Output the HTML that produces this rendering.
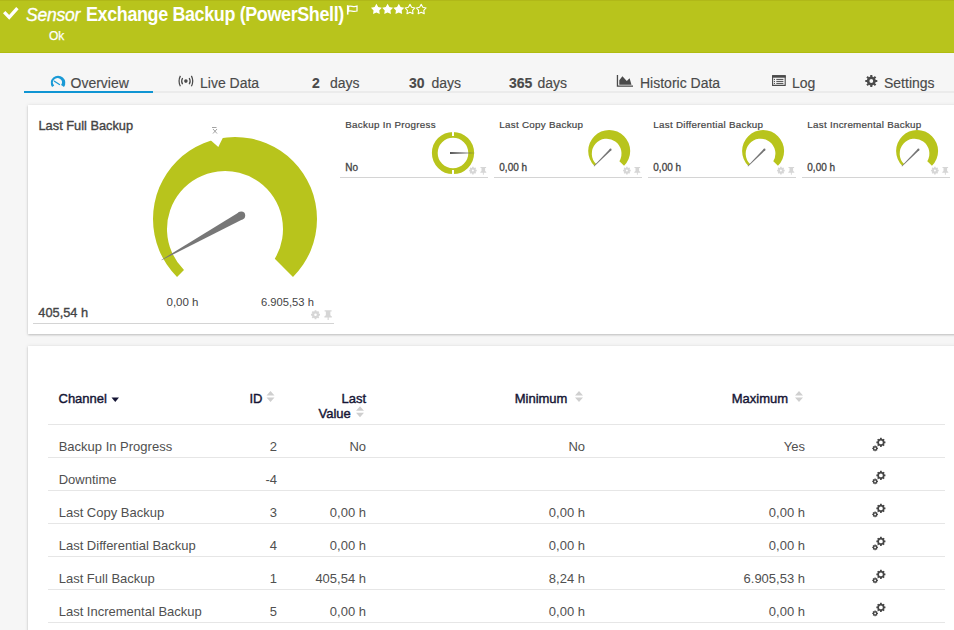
<!DOCTYPE html>
<html><head><meta charset="utf-8">
<style>
*{margin:0;padding:0;box-sizing:border-box}
html,body{width:954px;height:630px;overflow:hidden;background:#f6f6f6;font-family:"Liberation Sans",sans-serif;position:relative}
.a{position:absolute;white-space:nowrap;line-height:1}
.panel{position:absolute;background:#fff;box-shadow:0 1px 2px rgba(0,0,0,.2),0 0 4px rgba(0,0,0,.08)}
svg{position:absolute;left:0;top:0}
</style></head><body>
<div class="a" style="left:0;top:0;width:954px;height:52px;background:#b8c41c"></div>
<div class="a" style="left:0;top:0;width:954px;height:1px;background:#b0b818"></div>
<div class="a" style="left:0;top:52px;width:954px;height:1px;background:#b0bc10"></div>
<div class="a" style="left:24px;top:91px;width:930px;height:2px;background:#ebebeb"></div>
<div class="a" style="left:24px;top:91px;width:129px;height:2px;background:#0f95d3"></div>
<div class="panel" style="left:28px;top:105px;width:940px;height:229px"></div>
<div class="panel" style="left:28px;top:346px;width:940px;height:300px"></div>
<div class="a " style="left:26px;top:7.19px;font-size:17.5px;font-style:italic;color:#fff;letter-spacing:-0.2px;-webkit-text-stroke:0.35px #fff">Sensor</div>
<div class="a " style="left:86px;top:4.89px;font-size:19.5px;font-weight:bold;color:#fff;letter-spacing:-0.4px;transform:scaleX(0.92);transform-origin:0 0">Exchange Backup (PowerShell)</div>
<div class="a " style="left:49px;top:29.64px;font-size:12px;color:#fff;-webkit-text-stroke:0.25px #fff">Ok</div>
<div class="a " style="left:70.5px;top:76.15px;font-size:14px;color:#4a4a4a;-webkit-text-stroke:0.15px #4a4a4a">Overview</div>
<div class="a " style="left:200px;top:76.15px;font-size:14px;color:#4a4a4a;-webkit-text-stroke:0.15px #4a4a4a">Live Data</div>
<div class="a " style="left:312px;top:76.15px;font-size:14px;color:#4a4a4a;-webkit-text-stroke:0.15px #4a4a4a"><b>2</b></div>
<div class="a " style="left:330px;top:76.15px;font-size:14px;color:#4a4a4a;-webkit-text-stroke:0.15px #4a4a4a">days</div>
<div class="a " style="left:409px;top:76.15px;font-size:14px;color:#4a4a4a;-webkit-text-stroke:0.15px #4a4a4a"><b>30</b></div>
<div class="a " style="left:431.5px;top:76.15px;font-size:14px;color:#4a4a4a;-webkit-text-stroke:0.15px #4a4a4a">days</div>
<div class="a " style="left:509px;top:76.15px;font-size:14px;color:#4a4a4a;-webkit-text-stroke:0.15px #4a4a4a"><b>365</b></div>
<div class="a " style="left:537.5px;top:76.15px;font-size:14px;color:#4a4a4a;-webkit-text-stroke:0.15px #4a4a4a">days</div>
<div class="a " style="left:640px;top:76.15px;font-size:14px;color:#4a4a4a;-webkit-text-stroke:0.15px #4a4a4a">Historic Data</div>
<div class="a " style="left:792px;top:76.15px;font-size:14px;color:#4a4a4a;-webkit-text-stroke:0.15px #4a4a4a">Log</div>
<div class="a " style="left:884px;top:76.15px;font-size:14px;color:#4a4a4a;-webkit-text-stroke:0.15px #4a4a4a">Settings</div>
<div class="a " style="left:38.5px;top:119.96px;font-size:12.8px;color:#444;-webkit-text-stroke:0.35px #444">Last Full Backup</div>
<div class="a " style="left:38.3px;top:307.16px;font-size:12.8px;color:#444;-webkit-text-stroke:0.35px #444">405,54 h</div>
<div class="a " style="left:166.5px;top:297.17px;font-size:11.5px;color:#444">0,00 h</div>
<div class="a " style="left:261px;top:297.42px;font-size:11.2px;color:#444">6.905,53 h</div>
<div class="a " style="left:345.3px;top:119.90px;font-size:9.8px;color:#444;letter-spacing:0.28px;-webkit-text-stroke:0.2px #444">Backup In Progress</div>
<div class="a " style="left:345.3px;top:162.53px;font-size:10px;color:#444;-webkit-text-stroke:0.3px #444">No</div>
<div class="a " style="left:499.3px;top:119.90px;font-size:9.8px;color:#444;letter-spacing:0.28px;-webkit-text-stroke:0.2px #444">Last Copy Backup</div>
<div class="a " style="left:499.3px;top:162.53px;font-size:10px;color:#444;-webkit-text-stroke:0.3px #444">0,00 h</div>
<div class="a " style="left:653.3px;top:119.90px;font-size:9.8px;color:#444;letter-spacing:0.28px;-webkit-text-stroke:0.2px #444">Last Differential Backup</div>
<div class="a " style="left:653.3px;top:162.53px;font-size:10px;color:#444;-webkit-text-stroke:0.3px #444">0,00 h</div>
<div class="a " style="left:807.3px;top:119.90px;font-size:9.8px;color:#444;letter-spacing:0.28px;-webkit-text-stroke:0.2px #444">Last Incremental Backup</div>
<div class="a " style="left:807.3px;top:162.53px;font-size:10px;color:#444;-webkit-text-stroke:0.3px #444">0,00 h</div>
<div class="a " style="left:58.5px;top:392.00px;font-size:13px;color:#151535;-webkit-text-stroke:0.4px #151535">Channel</div>
<div class="a " style="left:249.5px;top:392.00px;font-size:13px;color:#151535;-webkit-text-stroke:0.4px #151535">ID</div>
<div class="a " style="right:588px;top:392.00px;font-size:13px;color:#151535;-webkit-text-stroke:0.4px #151535">Last</div>
<div class="a " style="left:318.5px;top:406.60px;font-size:13px;color:#151535;-webkit-text-stroke:0.4px #151535">Value</div>
<div class="a " style="left:514.7px;top:392.00px;font-size:13px;color:#151535;-webkit-text-stroke:0.4px #151535">Minimum</div>
<div class="a " style="left:731.7px;top:392.00px;font-size:13px;color:#151535;-webkit-text-stroke:0.4px #151535">Maximum</div>
<div class="a " style="left:58.7px;top:440.10px;font-size:13px;color:#505050">Backup In Progress</div>
<div class="a " style="right:677px;top:440.10px;font-size:13px;color:#505050">2</div>
<div class="a " style="right:588px;top:440.10px;font-size:13px;color:#505050">No</div>
<div class="a " style="right:369px;top:440.10px;font-size:13px;color:#505050">No</div>
<div class="a " style="right:149px;top:440.10px;font-size:13px;color:#505050">Yes</div>
<div class="a " style="left:58.7px;top:473.10px;font-size:13px;color:#505050">Downtime</div>
<div class="a " style="right:677px;top:473.10px;font-size:13px;color:#505050">-4</div>
<div class="a " style="left:58.7px;top:506.10px;font-size:13px;color:#505050">Last Copy Backup</div>
<div class="a " style="right:677px;top:506.10px;font-size:13px;color:#505050">3</div>
<div class="a " style="right:588px;top:506.10px;font-size:13px;color:#505050">0,00 h</div>
<div class="a " style="right:369px;top:506.10px;font-size:13px;color:#505050">0,00 h</div>
<div class="a " style="right:149px;top:506.10px;font-size:13px;color:#505050">0,00 h</div>
<div class="a " style="left:58.7px;top:539.10px;font-size:13px;color:#505050">Last Differential Backup</div>
<div class="a " style="right:677px;top:539.10px;font-size:13px;color:#505050">4</div>
<div class="a " style="right:588px;top:539.10px;font-size:13px;color:#505050">0,00 h</div>
<div class="a " style="right:369px;top:539.10px;font-size:13px;color:#505050">0,00 h</div>
<div class="a " style="right:149px;top:539.10px;font-size:13px;color:#505050">0,00 h</div>
<div class="a " style="left:58.7px;top:572.10px;font-size:13px;color:#505050">Last Full Backup</div>
<div class="a " style="right:677px;top:572.10px;font-size:13px;color:#505050">1</div>
<div class="a " style="right:588px;top:572.10px;font-size:13px;color:#505050">405,54 h</div>
<div class="a " style="right:369px;top:572.10px;font-size:13px;color:#505050">8,24 h</div>
<div class="a " style="right:149px;top:572.10px;font-size:13px;color:#505050">6.905,53 h</div>
<div class="a " style="left:58.7px;top:605.10px;font-size:13px;color:#505050">Last Incremental Backup</div>
<div class="a " style="right:677px;top:605.10px;font-size:13px;color:#505050">5</div>
<div class="a " style="right:588px;top:605.10px;font-size:13px;color:#505050">0,00 h</div>
<div class="a " style="right:369px;top:605.10px;font-size:13px;color:#505050">0,00 h</div>
<div class="a " style="right:149px;top:605.10px;font-size:13px;color:#505050">0,00 h</div>
<svg width="954" height="630" viewBox="0 0 954 630">
<path d="M4.2 12.2 L9.2 17.4 L17.4 8.2" fill="none" stroke="#fff" stroke-width="3.3"/>
<path d="M347.7 5.2 V14.6" stroke="#fff" stroke-width="1.6"/><path d="M348.6 6.4 C351.2 5.4, 353.4 7.6, 357 6.2 V11 C353.4 12.4, 351.2 10.2, 348.6 11.2 Z" fill="none" stroke="#fff" stroke-width="1.25"/>
<path d="M376.40 3.80 L374.62 7.06 L370.98 7.74 L373.53 10.43 L373.05 14.11 L376.40 12.52 L379.75 14.11 L379.27 10.43 L381.82 7.74 L378.18 7.06Z" fill="#fff"/>
<path d="M387.60 3.80 L385.82 7.06 L382.18 7.74 L384.73 10.43 L384.25 14.11 L387.60 12.52 L390.95 14.11 L390.47 10.43 L393.02 7.74 L389.38 7.06Z" fill="#fff"/>
<path d="M398.80 3.80 L397.02 7.06 L393.38 7.74 L395.93 10.43 L395.45 14.11 L398.80 12.52 L402.15 14.11 L401.67 10.43 L404.22 7.74 L400.58 7.06Z" fill="#fff"/>
<path d="M410.00 3.80 L408.22 7.06 L404.58 7.74 L407.13 10.43 L406.65 14.11 L410.00 12.52 L413.35 14.11 L412.87 10.43 L415.42 7.74 L411.78 7.06Z" fill="none" stroke="#fff" stroke-width="1.2" stroke-linejoin="round" transform="translate(410.0 9.5) scale(0.9) translate(-410.0 -9.5)"/>
<path d="M421.20 3.80 L419.42 7.06 L415.78 7.74 L418.33 10.43 L417.85 14.11 L421.20 12.52 L424.55 14.11 L424.07 10.43 L426.62 7.74 L422.98 7.06Z" fill="none" stroke="#fff" stroke-width="1.2" stroke-linejoin="round" transform="translate(421.2 9.5) scale(0.9) translate(-421.2 -9.5)"/>
<path d="M52.11 87.11 A7.25 7.25 0 1 1 63.99 87.11 L61.10 85.09 A4.45 4.45 0 1 0 54.23 85.62 Z" fill="#1a9ad6"/>
<path d="M54.4 81.2 L59.5 84.5" stroke="#1a9ad6" stroke-width="1.3" stroke-linecap="round"/>
<circle cx="185.9" cy="81.1" r="1.8" fill="#4a4a4a"/>
<path d="M180.4 75.9 A11.4 11.4 0 0 0 180.4 86.3 M191.4 75.9 A11.4 11.4 0 0 1 191.4 86.3 M182.6 78 A6.1 6.1 0 0 0 182.6 84.3 M189.2 78 A6.1 6.1 0 0 1 189.2 84.3" fill="none" stroke="#4a4a4a" stroke-width="1.25"/>
<path d="M616.8 86.8 V74.9 H618.1 V85.6 H633 V86.8Z M619.3 84.7 V80.3 L622.4 76.3 L626.8 81 L629.6 78.3 L631.5 84.7Z" fill="#4a4a4a"/>
<path d="M772.6 76 H785.2 V85.4 H772.6Z" fill="none" stroke="#4a4a4a" stroke-width="1.1"/><rect x="772.1" y="75.1" width="13.6" height="2.6" fill="#4a4a4a"/><path d="M776.3 79.4 H783.4 M776.3 81.4 H783.4 M776.3 83.4 H783.4" stroke="#4a4a4a" stroke-width="1"/><circle cx="774.4" cy="79.4" r="0.6" fill="#4a4a4a"/><circle cx="774.4" cy="81.4" r="0.6" fill="#4a4a4a"/><circle cx="774.4" cy="83.4" r="0.6" fill="#4a4a4a"/>
<path d="M875.70 79.98 L877.31 79.94 L877.31 82.06 L875.70 82.02 L875.13 83.39 L876.30 84.50 L874.80 86.00 L873.69 84.83 L872.32 85.40 L872.36 87.01 L870.24 87.01 L870.28 85.40 L868.91 84.83 L867.80 86.00 L866.30 84.50 L867.47 83.39 L866.90 82.02 L865.29 82.06 L865.29 79.94 L866.90 79.98 L867.47 78.61 L866.30 77.50 L867.80 76.00 L868.91 77.17 L870.28 76.60 L870.24 74.99 L872.36 74.99 L872.32 76.60 L873.69 77.17 L874.80 76.00 L876.30 77.50 L875.13 78.61Z M873.20 81.00 A1.9 1.9 0 1 0 869.40 81.00 A1.9 1.9 0 1 0 873.20 81.00Z" fill="#4a4a4a" fill-rule="evenodd"/>
<path d="M177.02 276.98 A82.00 82.00 0 1 1 292.98 276.98 L274.77 258.77 A58.00 58.00 0 1 0 183.99 270.01 Z" fill="#b8c41c"/>
<path d="M203.3 133.7 L218.3 146.9 L227.3 128.7 Z" fill="#fff"/>
<path d="M239.38 212.08 L161.29 259.91 L161.53 260.34 L243.19 218.89Z" fill="#777"/><circle cx="241.29" cy="215.49" r="3.90" fill="#777"/>
<path d="M594.35 165.85 A21.00 21.00 0 1 1 624.05 165.85 L619.39 161.19 A14.85 14.85 0 1 0 596.14 164.06 Z" fill="#b8c41c"/>
<path d="M609.83 148.92 L593.76 166.09 L594.11 166.44 L611.28 150.37Z" fill="#747474"/><circle cx="610.56" cy="149.64" r="1.02" fill="#747474"/>
<path d="M748.25 165.85 A21.00 21.00 0 1 1 777.95 165.85 L773.29 161.19 A14.85 14.85 0 1 0 750.04 164.06 Z" fill="#b8c41c"/>
<path d="M763.73 148.92 L747.66 166.09 L748.01 166.44 L765.18 150.37Z" fill="#747474"/><circle cx="764.46" cy="149.64" r="1.02" fill="#747474"/>
<path d="M902.25 165.85 A21.00 21.00 0 1 1 931.95 165.85 L927.29 161.19 A14.85 14.85 0 1 0 904.04 164.06 Z" fill="#b8c41c"/>
<path d="M917.73 148.92 L901.66 166.09 L902.01 166.44 L919.18 150.37Z" fill="#747474"/><circle cx="918.46" cy="149.64" r="1.02" fill="#747474"/>
<circle cx="453" cy="153" r="18.2" fill="none" stroke="#b8c41c" stroke-width="5.8"/>
<rect x="452" y="128" width="2" height="8" fill="#fff"/><rect x="452" y="170" width="2" height="8" fill="#fff"/>
<defs><linearGradient id="ng" x1="0" x2="1"><stop offset="0" stop-color="#555"/><stop offset="1" stop-color="#555" stop-opacity="0.05"/></linearGradient></defs>
<rect x="450" y="152" width="25" height="2" fill="url(#ng)"/>
<path d="M212 127.5 H216.5" stroke="#999" stroke-width="0.9"/><path d="M213 129 L217 133.5 M217 129 L213 133.5" stroke="#999" stroke-width="0.9"/>
<rect x="33" y="323" width="301" height="1" fill="#d4d4d4"/>
<path d="M318.97 313.77 L320.02 313.82 L320.02 315.58 L318.97 315.63 L318.61 316.49 L319.31 317.27 L318.07 318.51 L317.29 317.81 L316.43 318.17 L316.38 319.22 L314.62 319.22 L314.57 318.17 L313.71 317.81 L312.93 318.51 L311.69 317.27 L312.39 316.49 L312.03 315.63 L310.98 315.58 L310.98 313.82 L312.03 313.77 L312.39 312.91 L311.69 312.13 L312.93 310.89 L313.71 311.59 L314.57 311.23 L314.62 310.18 L316.38 310.18 L316.43 311.23 L317.29 311.59 L318.07 310.89 L319.31 312.13 L318.61 312.91Z M316.80 314.70 A1.3 1.3 0 1 0 314.20 314.70 A1.3 1.3 0 1 0 316.80 314.70Z" fill="#d6d6d6" fill-rule="evenodd"/>
<path d="M324.60 310.20 L331.60 310.20 L331.60 311.45 L330.35 311.45 L330.35 315.20 L331.85 316.45 L331.85 317.45 L328.73 317.45 L328.73 319.95 L327.60 319.95 L327.60 317.45 L324.35 317.45 L324.35 316.45 L325.85 315.20 L325.85 311.45 L324.60 311.45Z" fill="#d6d6d6"/>
<rect x="340" y="177" width="148" height="1" fill="#d4d4d4"/>
<path d="M475.84 169.81 L476.73 169.86 L476.73 171.34 L475.84 171.39 L475.53 172.12 L476.13 172.78 L475.08 173.83 L474.42 173.23 L473.69 173.54 L473.64 174.43 L472.16 174.43 L472.11 173.54 L471.38 173.23 L470.72 173.83 L469.67 172.78 L470.27 172.12 L469.96 171.39 L469.07 171.34 L469.07 169.86 L469.96 169.81 L470.27 169.08 L469.67 168.42 L470.72 167.37 L471.38 167.97 L472.11 167.66 L472.16 166.77 L473.64 166.77 L473.69 167.66 L474.42 167.97 L475.08 167.37 L476.13 168.42 L475.53 169.08Z M473.90 170.60 A1.0 1.0 0 1 0 471.90 170.60 A1.0 1.0 0 1 0 473.90 170.60Z" fill="#d6d6d6" fill-rule="evenodd"/>
<path d="M480.50 167.00 L486.10 167.00 L486.10 168.00 L485.10 168.00 L485.10 171.00 L486.30 172.00 L486.30 172.80 L483.80 172.80 L483.80 174.80 L482.90 174.80 L482.90 172.80 L480.30 172.80 L480.30 172.00 L481.50 171.00 L481.50 168.00 L480.50 168.00Z" fill="#d6d6d6"/>
<rect x="494" y="177" width="148" height="1" fill="#d4d4d4"/>
<path d="M629.84 169.81 L630.73 169.86 L630.73 171.34 L629.84 171.39 L629.53 172.12 L630.13 172.78 L629.08 173.83 L628.42 173.23 L627.69 173.54 L627.64 174.43 L626.16 174.43 L626.11 173.54 L625.38 173.23 L624.72 173.83 L623.67 172.78 L624.27 172.12 L623.96 171.39 L623.07 171.34 L623.07 169.86 L623.96 169.81 L624.27 169.08 L623.67 168.42 L624.72 167.37 L625.38 167.97 L626.11 167.66 L626.16 166.77 L627.64 166.77 L627.69 167.66 L628.42 167.97 L629.08 167.37 L630.13 168.42 L629.53 169.08Z M627.90 170.60 A1.0 1.0 0 1 0 625.90 170.60 A1.0 1.0 0 1 0 627.90 170.60Z" fill="#d6d6d6" fill-rule="evenodd"/>
<path d="M634.50 167.00 L640.10 167.00 L640.10 168.00 L639.10 168.00 L639.10 171.00 L640.30 172.00 L640.30 172.80 L637.80 172.80 L637.80 174.80 L636.90 174.80 L636.90 172.80 L634.30 172.80 L634.30 172.00 L635.50 171.00 L635.50 168.00 L634.50 168.00Z" fill="#d6d6d6"/>
<rect x="648" y="177" width="148" height="1" fill="#d4d4d4"/>
<path d="M783.84 169.81 L784.73 169.86 L784.73 171.34 L783.84 171.39 L783.53 172.12 L784.13 172.78 L783.08 173.83 L782.42 173.23 L781.69 173.54 L781.64 174.43 L780.16 174.43 L780.11 173.54 L779.38 173.23 L778.72 173.83 L777.67 172.78 L778.27 172.12 L777.96 171.39 L777.07 171.34 L777.07 169.86 L777.96 169.81 L778.27 169.08 L777.67 168.42 L778.72 167.37 L779.38 167.97 L780.11 167.66 L780.16 166.77 L781.64 166.77 L781.69 167.66 L782.42 167.97 L783.08 167.37 L784.13 168.42 L783.53 169.08Z M781.90 170.60 A1.0 1.0 0 1 0 779.90 170.60 A1.0 1.0 0 1 0 781.90 170.60Z" fill="#d6d6d6" fill-rule="evenodd"/>
<path d="M788.50 167.00 L794.10 167.00 L794.10 168.00 L793.10 168.00 L793.10 171.00 L794.30 172.00 L794.30 172.80 L791.80 172.80 L791.80 174.80 L790.90 174.80 L790.90 172.80 L788.30 172.80 L788.30 172.00 L789.50 171.00 L789.50 168.00 L788.50 168.00Z" fill="#d6d6d6"/>
<rect x="802" y="177" width="148" height="1" fill="#d4d4d4"/>
<path d="M937.84 169.81 L938.73 169.86 L938.73 171.34 L937.84 171.39 L937.53 172.12 L938.13 172.78 L937.08 173.83 L936.42 173.23 L935.69 173.54 L935.64 174.43 L934.16 174.43 L934.11 173.54 L933.38 173.23 L932.72 173.83 L931.67 172.78 L932.27 172.12 L931.96 171.39 L931.07 171.34 L931.07 169.86 L931.96 169.81 L932.27 169.08 L931.67 168.42 L932.72 167.37 L933.38 167.97 L934.11 167.66 L934.16 166.77 L935.64 166.77 L935.69 167.66 L936.42 167.97 L937.08 167.37 L938.13 168.42 L937.53 169.08Z M935.90 170.60 A1.0 1.0 0 1 0 933.90 170.60 A1.0 1.0 0 1 0 935.90 170.60Z" fill="#d6d6d6" fill-rule="evenodd"/>
<path d="M942.50 167.00 L948.10 167.00 L948.10 168.00 L947.10 168.00 L947.10 171.00 L948.30 172.00 L948.30 172.80 L945.80 172.80 L945.80 174.80 L944.90 174.80 L944.90 172.80 L942.30 172.80 L942.30 172.00 L943.50 171.00 L943.50 168.00 L942.50 168.00Z" fill="#d6d6d6"/>
<rect x="48" y="424" width="897" height="1" fill="#e6e6e6"/>
<rect x="48" y="457" width="897" height="1" fill="#e6e6e6"/>
<path d="M884.47 441.51 L885.43 441.60 L885.43 443.20 L884.47 443.29 L884.05 444.30 L884.67 445.04 L883.54 446.17 L882.80 445.55 L881.79 445.97 L881.70 446.93 L880.10 446.93 L880.01 445.97 L879.00 445.55 L878.26 446.17 L877.13 445.04 L877.75 444.30 L877.33 443.29 L876.37 443.20 L876.37 441.60 L877.33 441.51 L877.75 440.50 L877.13 439.76 L878.26 438.63 L879.00 439.25 L880.01 438.83 L880.10 437.87 L881.70 437.87 L881.79 438.83 L882.80 439.25 L883.54 438.63 L884.67 439.76 L884.05 440.50Z M882.80 442.40 A1.9 1.9 0 1 0 879.00 442.40 A1.9 1.9 0 1 0 882.80 442.40Z" fill="#454545" fill-rule="evenodd"/>
<path d="M877.27 447.78 L877.94 447.80 L877.94 449.00 L877.27 449.02 L877.08 449.50 L877.53 449.98 L876.68 450.83 L876.20 450.38 L875.72 450.57 L875.70 451.24 L874.50 451.24 L874.48 450.57 L874.00 450.38 L873.52 450.83 L872.67 449.98 L873.12 449.50 L872.93 449.02 L872.26 449.00 L872.26 447.80 L872.93 447.78 L873.12 447.30 L872.67 446.82 L873.52 445.97 L874.00 446.42 L874.48 446.23 L874.50 445.56 L875.70 445.56 L875.72 446.23 L876.20 446.42 L876.68 445.97 L877.53 446.82 L877.08 447.30Z M876.00 448.40 A0.9 0.9 0 1 0 874.20 448.40 A0.9 0.9 0 1 0 876.00 448.40Z" fill="#454545" fill-rule="evenodd"/>
<rect x="48" y="490" width="897" height="1" fill="#e6e6e6"/>
<path d="M884.47 474.51 L885.43 474.60 L885.43 476.20 L884.47 476.29 L884.05 477.30 L884.67 478.04 L883.54 479.17 L882.80 478.55 L881.79 478.97 L881.70 479.93 L880.10 479.93 L880.01 478.97 L879.00 478.55 L878.26 479.17 L877.13 478.04 L877.75 477.30 L877.33 476.29 L876.37 476.20 L876.37 474.60 L877.33 474.51 L877.75 473.50 L877.13 472.76 L878.26 471.63 L879.00 472.25 L880.01 471.83 L880.10 470.87 L881.70 470.87 L881.79 471.83 L882.80 472.25 L883.54 471.63 L884.67 472.76 L884.05 473.50Z M882.80 475.40 A1.9 1.9 0 1 0 879.00 475.40 A1.9 1.9 0 1 0 882.80 475.40Z" fill="#454545" fill-rule="evenodd"/>
<path d="M877.27 480.78 L877.94 480.80 L877.94 482.00 L877.27 482.02 L877.08 482.50 L877.53 482.98 L876.68 483.83 L876.20 483.38 L875.72 483.57 L875.70 484.24 L874.50 484.24 L874.48 483.57 L874.00 483.38 L873.52 483.83 L872.67 482.98 L873.12 482.50 L872.93 482.02 L872.26 482.00 L872.26 480.80 L872.93 480.78 L873.12 480.30 L872.67 479.82 L873.52 478.97 L874.00 479.42 L874.48 479.23 L874.50 478.56 L875.70 478.56 L875.72 479.23 L876.20 479.42 L876.68 478.97 L877.53 479.82 L877.08 480.30Z M876.00 481.40 A0.9 0.9 0 1 0 874.20 481.40 A0.9 0.9 0 1 0 876.00 481.40Z" fill="#454545" fill-rule="evenodd"/>
<rect x="48" y="523" width="897" height="1" fill="#e6e6e6"/>
<path d="M884.47 507.51 L885.43 507.60 L885.43 509.20 L884.47 509.29 L884.05 510.30 L884.67 511.04 L883.54 512.17 L882.80 511.55 L881.79 511.97 L881.70 512.93 L880.10 512.93 L880.01 511.97 L879.00 511.55 L878.26 512.17 L877.13 511.04 L877.75 510.30 L877.33 509.29 L876.37 509.20 L876.37 507.60 L877.33 507.51 L877.75 506.50 L877.13 505.76 L878.26 504.63 L879.00 505.25 L880.01 504.83 L880.10 503.87 L881.70 503.87 L881.79 504.83 L882.80 505.25 L883.54 504.63 L884.67 505.76 L884.05 506.50Z M882.80 508.40 A1.9 1.9 0 1 0 879.00 508.40 A1.9 1.9 0 1 0 882.80 508.40Z" fill="#454545" fill-rule="evenodd"/>
<path d="M877.27 513.78 L877.94 513.80 L877.94 515.00 L877.27 515.02 L877.08 515.50 L877.53 515.98 L876.68 516.83 L876.20 516.38 L875.72 516.57 L875.70 517.24 L874.50 517.24 L874.48 516.57 L874.00 516.38 L873.52 516.83 L872.67 515.98 L873.12 515.50 L872.93 515.02 L872.26 515.00 L872.26 513.80 L872.93 513.78 L873.12 513.30 L872.67 512.82 L873.52 511.97 L874.00 512.42 L874.48 512.23 L874.50 511.56 L875.70 511.56 L875.72 512.23 L876.20 512.42 L876.68 511.97 L877.53 512.82 L877.08 513.30Z M876.00 514.40 A0.9 0.9 0 1 0 874.20 514.40 A0.9 0.9 0 1 0 876.00 514.40Z" fill="#454545" fill-rule="evenodd"/>
<rect x="48" y="556" width="897" height="1" fill="#e6e6e6"/>
<path d="M884.47 540.51 L885.43 540.60 L885.43 542.20 L884.47 542.29 L884.05 543.30 L884.67 544.04 L883.54 545.17 L882.80 544.55 L881.79 544.97 L881.70 545.93 L880.10 545.93 L880.01 544.97 L879.00 544.55 L878.26 545.17 L877.13 544.04 L877.75 543.30 L877.33 542.29 L876.37 542.20 L876.37 540.60 L877.33 540.51 L877.75 539.50 L877.13 538.76 L878.26 537.63 L879.00 538.25 L880.01 537.83 L880.10 536.87 L881.70 536.87 L881.79 537.83 L882.80 538.25 L883.54 537.63 L884.67 538.76 L884.05 539.50Z M882.80 541.40 A1.9 1.9 0 1 0 879.00 541.40 A1.9 1.9 0 1 0 882.80 541.40Z" fill="#454545" fill-rule="evenodd"/>
<path d="M877.27 546.78 L877.94 546.80 L877.94 548.00 L877.27 548.02 L877.08 548.50 L877.53 548.98 L876.68 549.83 L876.20 549.38 L875.72 549.57 L875.70 550.24 L874.50 550.24 L874.48 549.57 L874.00 549.38 L873.52 549.83 L872.67 548.98 L873.12 548.50 L872.93 548.02 L872.26 548.00 L872.26 546.80 L872.93 546.78 L873.12 546.30 L872.67 545.82 L873.52 544.97 L874.00 545.42 L874.48 545.23 L874.50 544.56 L875.70 544.56 L875.72 545.23 L876.20 545.42 L876.68 544.97 L877.53 545.82 L877.08 546.30Z M876.00 547.40 A0.9 0.9 0 1 0 874.20 547.40 A0.9 0.9 0 1 0 876.00 547.40Z" fill="#454545" fill-rule="evenodd"/>
<rect x="48" y="589" width="897" height="1" fill="#e6e6e6"/>
<path d="M884.47 573.51 L885.43 573.60 L885.43 575.20 L884.47 575.29 L884.05 576.30 L884.67 577.04 L883.54 578.17 L882.80 577.55 L881.79 577.97 L881.70 578.93 L880.10 578.93 L880.01 577.97 L879.00 577.55 L878.26 578.17 L877.13 577.04 L877.75 576.30 L877.33 575.29 L876.37 575.20 L876.37 573.60 L877.33 573.51 L877.75 572.50 L877.13 571.76 L878.26 570.63 L879.00 571.25 L880.01 570.83 L880.10 569.87 L881.70 569.87 L881.79 570.83 L882.80 571.25 L883.54 570.63 L884.67 571.76 L884.05 572.50Z M882.80 574.40 A1.9 1.9 0 1 0 879.00 574.40 A1.9 1.9 0 1 0 882.80 574.40Z" fill="#454545" fill-rule="evenodd"/>
<path d="M877.27 579.78 L877.94 579.80 L877.94 581.00 L877.27 581.02 L877.08 581.50 L877.53 581.98 L876.68 582.83 L876.20 582.38 L875.72 582.57 L875.70 583.24 L874.50 583.24 L874.48 582.57 L874.00 582.38 L873.52 582.83 L872.67 581.98 L873.12 581.50 L872.93 581.02 L872.26 581.00 L872.26 579.80 L872.93 579.78 L873.12 579.30 L872.67 578.82 L873.52 577.97 L874.00 578.42 L874.48 578.23 L874.50 577.56 L875.70 577.56 L875.72 578.23 L876.20 578.42 L876.68 577.97 L877.53 578.82 L877.08 579.30Z M876.00 580.40 A0.9 0.9 0 1 0 874.20 580.40 A0.9 0.9 0 1 0 876.00 580.40Z" fill="#454545" fill-rule="evenodd"/>
<rect x="48" y="622" width="897" height="1" fill="#e6e6e6"/>
<path d="M884.47 606.51 L885.43 606.60 L885.43 608.20 L884.47 608.29 L884.05 609.30 L884.67 610.04 L883.54 611.17 L882.80 610.55 L881.79 610.97 L881.70 611.93 L880.10 611.93 L880.01 610.97 L879.00 610.55 L878.26 611.17 L877.13 610.04 L877.75 609.30 L877.33 608.29 L876.37 608.20 L876.37 606.60 L877.33 606.51 L877.75 605.50 L877.13 604.76 L878.26 603.63 L879.00 604.25 L880.01 603.83 L880.10 602.87 L881.70 602.87 L881.79 603.83 L882.80 604.25 L883.54 603.63 L884.67 604.76 L884.05 605.50Z M882.80 607.40 A1.9 1.9 0 1 0 879.00 607.40 A1.9 1.9 0 1 0 882.80 607.40Z" fill="#454545" fill-rule="evenodd"/>
<path d="M877.27 612.78 L877.94 612.80 L877.94 614.00 L877.27 614.02 L877.08 614.50 L877.53 614.98 L876.68 615.83 L876.20 615.38 L875.72 615.57 L875.70 616.24 L874.50 616.24 L874.48 615.57 L874.00 615.38 L873.52 615.83 L872.67 614.98 L873.12 614.50 L872.93 614.02 L872.26 614.00 L872.26 612.80 L872.93 612.78 L873.12 612.30 L872.67 611.82 L873.52 610.97 L874.00 611.42 L874.48 611.23 L874.50 610.56 L875.70 610.56 L875.72 611.23 L876.20 611.42 L876.68 610.97 L877.53 611.82 L877.08 612.30Z M876.00 613.40 A0.9 0.9 0 1 0 874.20 613.40 A0.9 0.9 0 1 0 876.00 613.40Z" fill="#454545" fill-rule="evenodd"/>
<path d="M111.5 397.5 H119 L115.25 402Z" fill="#151535"/>
<path d="M266.5 395.5 L270.5 391 L274.5 395.5Z M266.5 397.5 L270.5 402 L274.5 397.5Z" fill="#cfcfcf"/>
<path d="M356 410.8 L360 406.3 L364 410.8Z M356 412.8 L360 417.3 L364 412.8Z" fill="#cfcfcf"/>
<path d="M575 395.5 L579 391 L583 395.5Z M575 397.5 L579 402 L583 397.5Z" fill="#cfcfcf"/>
<path d="M795 395.5 L799 391 L803 395.5Z M795 397.5 L799 402 L803 397.5Z" fill="#cfcfcf"/>
</svg>
</body></html>
